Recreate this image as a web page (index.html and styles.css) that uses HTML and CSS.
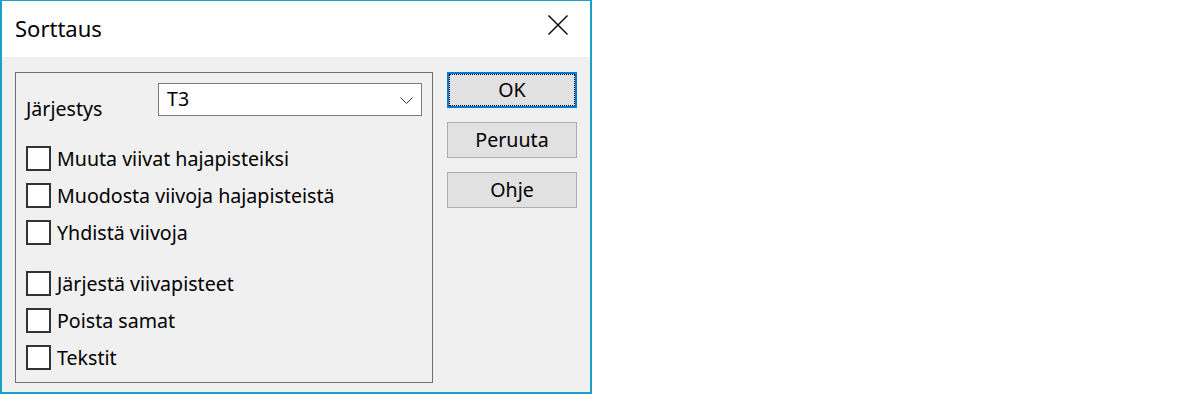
FILE: index.html
```html
<!DOCTYPE html>
<html lang="fi">
<head>
    <meta charset="UTF-8">
    <title>Sorttaus</title>
    <link rel="stylesheet" href="styles.css">
</head>
<body>
    <div class="dialog">
        <div class="titlebar">
            <span class="title">Sorttaus</span>
            <svg class="close" width="20" height="20" viewBox="0 0 20 20">
                <path d="M0.5 0.5 L19.5 19.5 M19.5 0.5 L0.5 19.5" stroke="#000" stroke-width="1.4" fill="none"/>
            </svg>
        </div>

        <div class="content">
            <div class="group">
                <div class="order-row">
                    <label class="order-label">Järjestys</label>
                    <div class="combo">
                        <span class="combo-value">T3</span>
                        <svg class="chevron" width="13" height="7" viewBox="0 0 13 7">
                            <path d="M0.5 0.5 L6.5 6.5 L12.5 0.5" stroke="#333" stroke-width="1" fill="none"/>
                        </svg>
                    </div>
                </div>

                <div class="checks">
                    <div class="check"><span class="box"></span>Muuta viivat hajapisteiksi</div>
                    <div class="check"><span class="box"></span>Muodosta viivoja hajapisteistä</div>
                    <div class="check"><span class="box"></span>Yhdistä viivoja</div>
                </div>

                <div class="checks second">
                    <div class="check"><span class="box"></span>Järjestä viivapisteet</div>
                    <div class="check"><span class="box"></span>Poista samat</div>
                    <div class="check"><span class="box"></span>Tekstit</div>
                </div>
            </div>

            <div class="buttons">
                <button class="btn default"><span class="focus">OK</span></button>
                <button class="btn">Peruuta</button>
                <button class="btn">Ohje</button>
            </div>
        </div>
    </div>
</body>
</html>
```

FILE: styles.css
```css
:root {
    --frame: #1ba0c6;
    --face: #f0f0f0;
    --button: #e1e1e1;
    --button-border: #adadad;
    --accent: #0078d7;
}

body {
    margin: 0;
    background: #ffffff;
    font-family: 'Noto Sans', 'Open Sans', sans-serif;
    font-size: 19.6px;
    color: #000;
}

.dialog {
    width: 592px;
    height: 394px;
    box-sizing: border-box;
    border: 2px solid var(--frame);
    border-top-width: 1px;
    background: var(--face);
    display: flex;
    flex-direction: column;
}

/* Barra de titulo */
.titlebar {
    height: 56px;
    background: #ffffff;
    display: flex;
    align-items: center;
    justify-content: space-between;
    padding: 0 22px 0 13px;
}

.title {
    font-size: 22px;
    line-height: 26px;
    margin-top: -2px;
}

.close {
    display: block;
    margin-top: -8px;
}

.content {
    display: flex;
    gap: 14px;
    padding: 15px 13px 0 13px;
}

.group {
    width: 418px;
    height: 311px;
    box-sizing: border-box;
    border: 1px solid #707070;
    padding: 10px 10px 0 10px;
}

.order-row {
    display: flex;
    align-items: flex-start;
}

.order-label {
    width: 132px;
    line-height: 25px;
    margin-top: 13px;
}

.combo {
    flex: 1;
    height: 33px;
    box-sizing: border-box;
    border: 1px solid #7a7a7a;
    background: #ffffff;
    display: flex;
    align-items: center;
    justify-content: space-between;
    padding: 0 8px 0 8px;
}

.combo-value {
    line-height: 29px;
    margin-top: -2px;
}

.chevron {
    display: block;
    margin-top: 2px;
}

.checks {
    display: flex;
    flex-direction: column;
    gap: 12px;
    margin-top: 25px;
}

.checks.second {
    margin-top: 26px;
}

.check {
    display: flex;
    align-items: center;
    height: 25px;
    line-height: 25px;
}

.box {
    width: 25px;
    height: 25px;
    box-sizing: border-box;
    border: 2px solid #333333;
    background: #ffffff;
    margin-right: 6px;
}

/* Botones */
.buttons {
    display: flex;
    flex-direction: column;
    gap: 14px;
}

.btn {
    width: 130px;
    height: 36px;
    box-sizing: border-box;
    border: 1px solid var(--button-border);
    background: var(--button);
    font-family: inherit;
    font-size: 19.6px;
    color: #000;
    padding: 0;
    line-height: 30px;
}

.btn.default {
    border: 2px solid var(--accent);
    padding: 0;
}

.btn .focus {
    display: block;
    height: 32px;
    box-sizing: border-box;
    border: 1px dotted #000;
    line-height: 30px;
}
```
